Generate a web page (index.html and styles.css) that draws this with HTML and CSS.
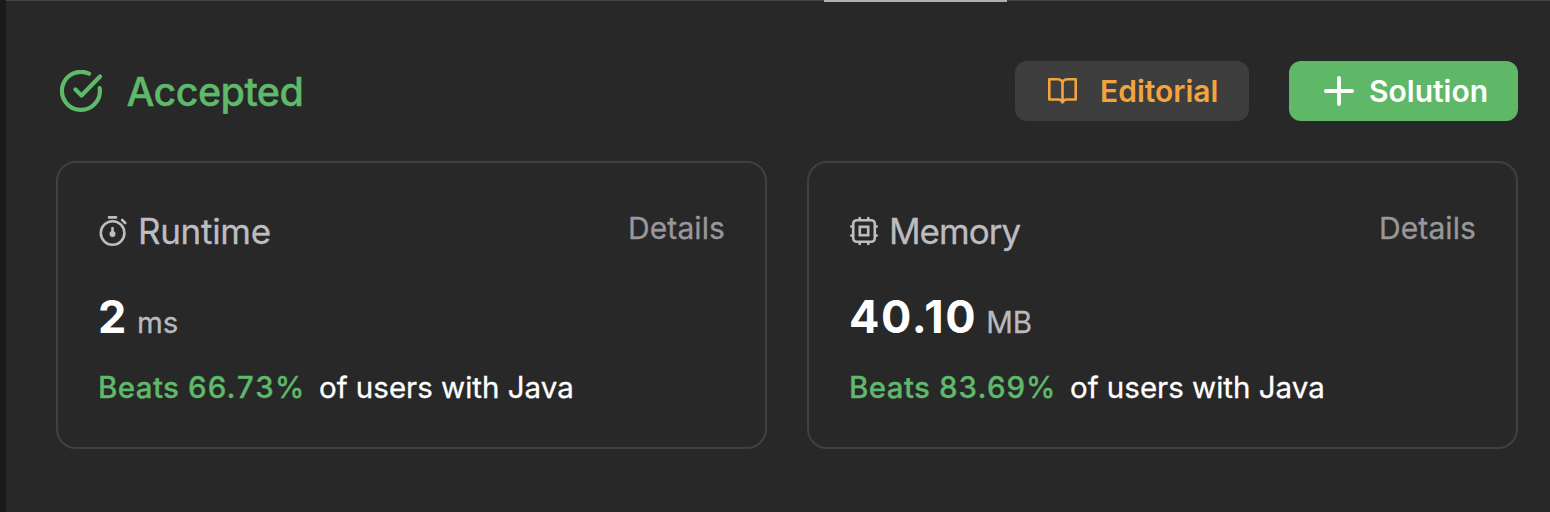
FILE: index.html
```html
<!DOCTYPE html>
<html lang="en">
<head>
<meta charset="utf-8">
<title>Submission result</title>
<link rel="stylesheet" href="styles.css">
</head>
<body>
<main class="panel">
  <div class="tab-line"><span class="tab-active"></span></div>
  <header class="header">
    <div class="status">
      <svg class="status-icon" width="44" height="44" viewBox="0 0 44 44" fill="none" stroke="currentColor" stroke-width="4.200" stroke-linecap="round" stroke-linejoin="round"><path d="M29 3.700A19 19 0 1 0 39.700 18.100M15.500 19.500L21.500 25.500L40 6.500"/></svg>
      <h1 class="status-text">Accepted</h1>
    </div>
    <div class="actions">
      <button class="btn btn-editorial">
        <svg width="30" height="28" viewBox="0 0 30 28" fill="none" stroke="currentColor" stroke-width="2.600" stroke-linejoin="round"><path d="M2.300 2.300H10.600Q15.500 2.300 15.500 7Q15.500 2.300 20.400 2.300H28.700V22.500H19.500Q17 22.500 15.500 25.300Q14 22.500 11.700 22.500H2.300ZM15.500 6V24"/></svg>
        <span class="editorial-label">Editorial</span>
      </button>
      <button class="btn btn-solution">
        <svg width="30" height="30" viewBox="0 0 30 30" fill="none" stroke="currentColor" stroke-width="3.800" stroke-linecap="round"><path d="M15 1.900V28.100M1.900 15H28.100"/></svg>
        <span class="solution-label">Solution</span>
      </button>
    </div>
  </header>
  <section class="cards">
    <article class="card">
      <div class="card-head">
        <div class="card-title">
          <svg width="28" height="32" viewBox="0 0 28 32" fill="none" stroke="currentColor" stroke-width="2.600" stroke-linecap="round"><circle cx="13.600" cy="18" r="11.800"/><path d="M10 2.400H17M23.200 5L26.200 8M13.500 13V18"/><circle cx="13.500" cy="19" r="2.200" fill="currentColor" stroke-width="1.600"/></svg>
          <h2 class="title-text runtime">Runtime</h2>
        </div>
        <a class="details">Details</a>
      </div>
      <p class="metric"><span class="value">2</span><span class="unit">ms</span></p>
      <p class="rank"><span class="beats">Beats <span class="percent">66.73%</span></span><span class="users">of users with Java</span></p>
    </article>
    <article class="card">
      <div class="card-head">
        <div class="card-title">
          <svg width="28" height="32" viewBox="0 0 28 32" fill="none" stroke="currentColor" stroke-width="2.600" stroke-linecap="round"><rect x="3.200" y="5.200" width="21.600" height="21.600" rx="3.500"/><rect x="9.800" y="11.800" width="8.400" height="8.400"/><path d="M9.700 3V5M18.300 3V5M9.700 27V29M18.300 27V29M1.300 11.500H3M1.300 20.500H3M25 11.500H26.700M25 20.500H26.700"/></svg>
          <h2 class="title-text memory">Memory</h2>
        </div>
        <a class="details">Details</a>
      </div>
      <p class="metric"><span class="value">40.10</span><span class="unit mb">MB</span></p>
      <p class="rank"><span class="beats">Beats <span class="percent">83.69%</span></span><span class="users">of users with Java</span></p>
    </article>
  </section>
</main>
</body>
</html>
```
FILE: styles.css
```css
* { box-sizing: border-box; margin: 0; padding: 0; }
body { background: #282828; font-family: Inter, "Liberation Sans", sans-serif; }
svg { display: block; flex: none; }
.panel { height: 512px; border-left: 6px solid #1a1a1a; background: #282828; overflow: hidden; }
.tab-line { height: 2px; padding-left: 818px; background: linear-gradient(#464646 50%, #282828 50%); }
.tab-active { display: block; width: 183px; height: 2px; background: #afafaf; }
.header { display: flex; justify-content: space-between; height: 60px; margin: 59px 32px 0 53px; }
.status { display: flex; align-items: center; gap: 22.5px; color: #5eb96a; }
.status-icon { margin: 2px 0 0 1px; }
.status-text { font-size: 39.5px; font-weight: 500; line-height: 60px; letter-spacing: -0.6px; padding-top: 2px; -webkit-text-stroke: 0.4px currentColor; }
.actions { display: flex; gap: 40px; }
.btn { display: flex; align-items: center; height: 60px; border: 0; border-radius: 12px; font: 600 30px/60px Inter, sans-serif; white-space: nowrap; }
.btn-editorial { width: 234px; padding-left: 32px; gap: 23px; background: #3e3e3e; color: #f4a43c; }
.btn-solution { width: 229px; padding-left: 35px; gap: 15px; background: #5eb868; color: #fff; }
.cards { display: flex; gap: 40px; margin: 40px 32px 0 50px; }
.card { flex: 1; height: 288px; border: 2px solid #404040; border-radius: 20px; padding: 44px 40px 0 41px; }
.card-head { display: flex; justify-content: space-between; height: 48px; }
.card-title { display: flex; align-items: center; gap: 11px; color: #bdbdc1; }
.title-text { font-size: 35px; line-height: 46px; font-weight: 400; -webkit-text-stroke: 0.3px currentColor; }
.runtime { letter-spacing: -0.3px; }
.memory { letter-spacing: -1px; }
.details { font-size: 30px; line-height: 42px; letter-spacing: 0.1px; color: #98989b; -webkit-text-stroke: 0.3px currentColor; }
.metric { display: flex; align-items: baseline; gap: 9px; height: 60px; margin: 32px 0 0 -1px; line-height: 60px; }
.value { color: #fff; font-size: 45px; font-weight: 700; letter-spacing: 1.6px; }
.unit { color: #b9b9be; font-size: 29.5px; -webkit-text-stroke: 0.3px currentColor; }
.rank { display: flex; gap: 14px; margin: 18px 0 0 -1px; font-size: 29.5px; line-height: 44px; white-space: nowrap; }
.beats { color: #5eb96a; font-weight: 500; letter-spacing: 0.4px; -webkit-text-stroke: 0.3px currentColor; }
.percent { font-variant-numeric: tabular-nums; letter-spacing: 0.6px; }
.users { color: #fff; -webkit-text-stroke: 0.3px currentColor; }
```
